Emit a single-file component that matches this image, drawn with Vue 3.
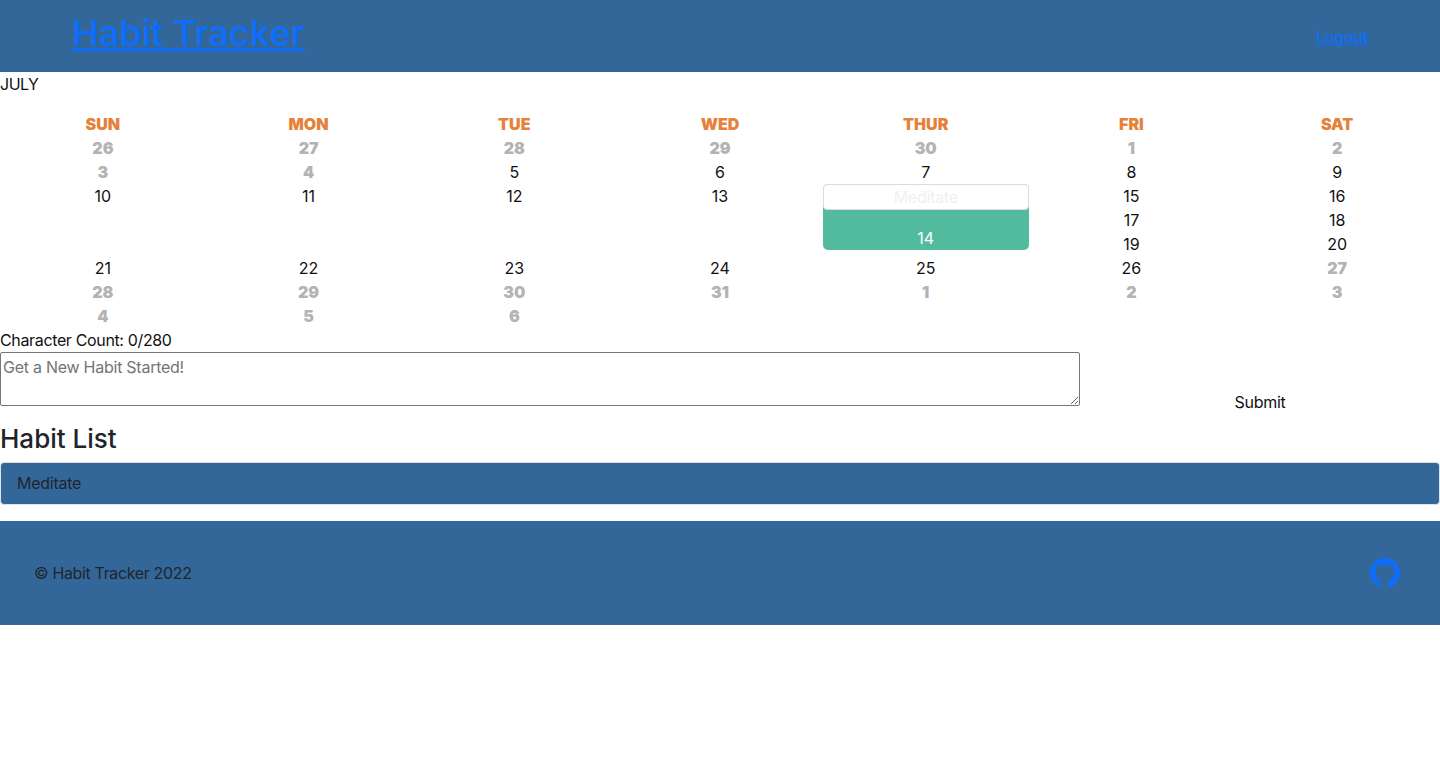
<template>
  <div class="page">
    <header class="top-bar">
      <a class="brand" href="#">Habit Tracker</a>
      <a class="logout" href="#">Logout</a>
    </header>

    <div class="month">JULY</div>

    <div class="calendar">
      <div class="day-name" v-for="d in dayNames" :key="d">{{ d }}</div>
      <template v-for="c in cells" :key="c.key">
        <div v-if="c.habit" class="cell tall done">
          <button class="habit-btn">{{ c.habit }}</button>
          <span class="done-num">{{ c.n }}</span>
        </div>
        <div v-else class="cell" :class="{ muted: c.muted, tall: c.tall }">{{ c.n }}</div>
      </template>
    </div>

    <div class="count">Character Count: 0/280</div>
    <form class="habit-form" @submit.prevent>
      <textarea class="habit-input" placeholder="Get a New Habit Started!"></textarea>
      <button class="submit" type="submit">Submit</button>
    </form>

    <h3 class="list-title">Habit List</h3>
    <ul class="habit-list">
      <li>Meditate</li>
    </ul>

    <footer class="bottom-bar">
      <span class="copy">© Habit Tracker 2022</span>
      <a class="gh" href="#" aria-label="GitHub">
        <svg viewBox="0 0 16 16" width="30" height="30" fill="currentColor">
          <path d="M8 0C3.58 0 0 3.58 0 8c0 3.54 2.29 6.53 5.47 7.59.4.07.55-.17.55-.38 0-.19-.01-.82-.01-1.49-2.01.37-2.53-.49-2.69-.94-.09-.23-.48-.94-.82-1.13-.28-.15-.68-.52-.01-.53.63-.01 1.08.58 1.23.82.72 1.21 1.87.87 2.33.66.07-.52.28-.87.51-1.07-1.78-.2-3.64-.89-3.64-3.95 0-.87.31-1.59.82-2.15-.08-.2-.36-1.02.08-2.12 0 0 .67-.21 2.2.82.64-.18 1.32-.27 2-.27.68 0 1.36.09 2 .27 1.53-1.04 2.2-.82 2.2-.82.44 1.1.16 1.92.08 2.12.51.56.82 1.27.82 2.15 0 3.07-1.87 3.75-3.65 3.95.29.25.54.73.54 1.48 0 1.07-.01 1.93-.01 2.2 0 .21.15.46.55.38A8.013 8.013 0 0 0 16 8c0-4.42-3.58-8-8-8z" />
        </svg>
      </a>
    </footer>
  </div>
</template>

<script setup>
const dayNames = ['SUN', 'MON', 'TUE', 'WED', 'THUR', 'FRI', 'SAT']

const cells = []
function add(nums, opts = {}) {
  nums.forEach(n => cells.push({ n, key: cells.length, ...opts }))
}
add([26, 27, 28, 29, 30, 1, 2, 3, 4], { muted: true })
add([5, 6, 7, 8, 9])
add([10, 11, 12, 13], { tall: true })
add([14], { habit: 'Meditate' })
add([15, 16, 17, 18, 19, 20, 21, 22, 23, 24, 25, 26])
add([27, 28, 29, 30, 31, 1, 2, 3, 4, 5, 6], { muted: true })
</script>

<style>
body {
  font-family: Inter, "Liberation Sans", sans-serif;
  font-size: 16px;
  line-height: 1.5;
  letter-spacing: -0.016em;
  color: #212529;
  background: #fff;
}
</style>

<style scoped>
.top-bar {
  height: 72px;
  background: #33679a;
  display: flex;
  align-items: center;
  justify-content: space-between;
  padding: 0 72px;
}
.brand { font-size: 36px; font-weight: 500; line-height: 60px; color: #0d6efd; margin-bottom: 6px; letter-spacing: 0.003em; }
.logout { font-size: 16px; font-weight: 500; color: #0d6efd; margin-top: 2px; letter-spacing: -0.02em; }

.month { color: #111; margin-bottom: 16px; letter-spacing: -0.03em; }

.calendar {
  display: grid;
  grid-template-columns: repeat(7, 1fr);
  grid-auto-rows: 24px;
  text-align: center;
  color: #111;
  letter-spacing: 0;
}
.day-name { font-weight: 900; color: #e58139; }
.muted { font-weight: 900; color: #b3b3b3; }
.tall { grid-row: span 3; }

.done {
  align-self: start;
  height: 66px;
  background: #52bb9e;
  border-radius: 5px;
  color: #fff;
  display: flex;
  flex-direction: column;
  justify-content: space-between;
}
.habit-btn {
  height: 26px;
  padding: 0;
  background: #fff;
  border: 1px solid #dcdcdc;
  border-radius: 4px;
  font: inherit;
  letter-spacing: -0.016em;
  color: #eef1f0;
}
.done-num { line-height: 24px; }

.count { color: #111; letter-spacing: -0.022em; }
.habit-form { display: flex; align-items: flex-end; margin-bottom: 9px; }
.habit-input {
  width: 75%;
  height: 54px;
  margin: 0 0 8px;
  padding: 2px;
  box-sizing: border-box;
  border: 1px solid #767676;
  border-radius: 2px;
  font: inherit;
  letter-spacing: -0.016em;
  color: #000;
  resize: vertical;
  display: block;
}
.submit {
  width: 25%;
  height: 24px;
  padding: 0;
  background: none;
  border: 0;
  font: inherit;
  letter-spacing: -0.016em;
  color: #111;
}
.list-title { margin: 0 0 7px; font-size: 26px; font-weight: 500; line-height: 32px; letter-spacing: 0; }

.habit-list { list-style: none; margin: 0 0 16px; padding: 0; }
.habit-list li {
  background: #33679a;
  border: 1px solid #dfe3e8;
  border-radius: 4px;
  padding: 8px 16px 9px;
}

.bottom-bar {
  height: 104px;
  background: #33679a;
  display: flex;
  align-items: center;
  justify-content: space-between;
  padding: 0 40px 0 34px;
}
.copy { letter-spacing: -0.022em; }
.gh { color: #0d6efd; display: flex; }
</style>
